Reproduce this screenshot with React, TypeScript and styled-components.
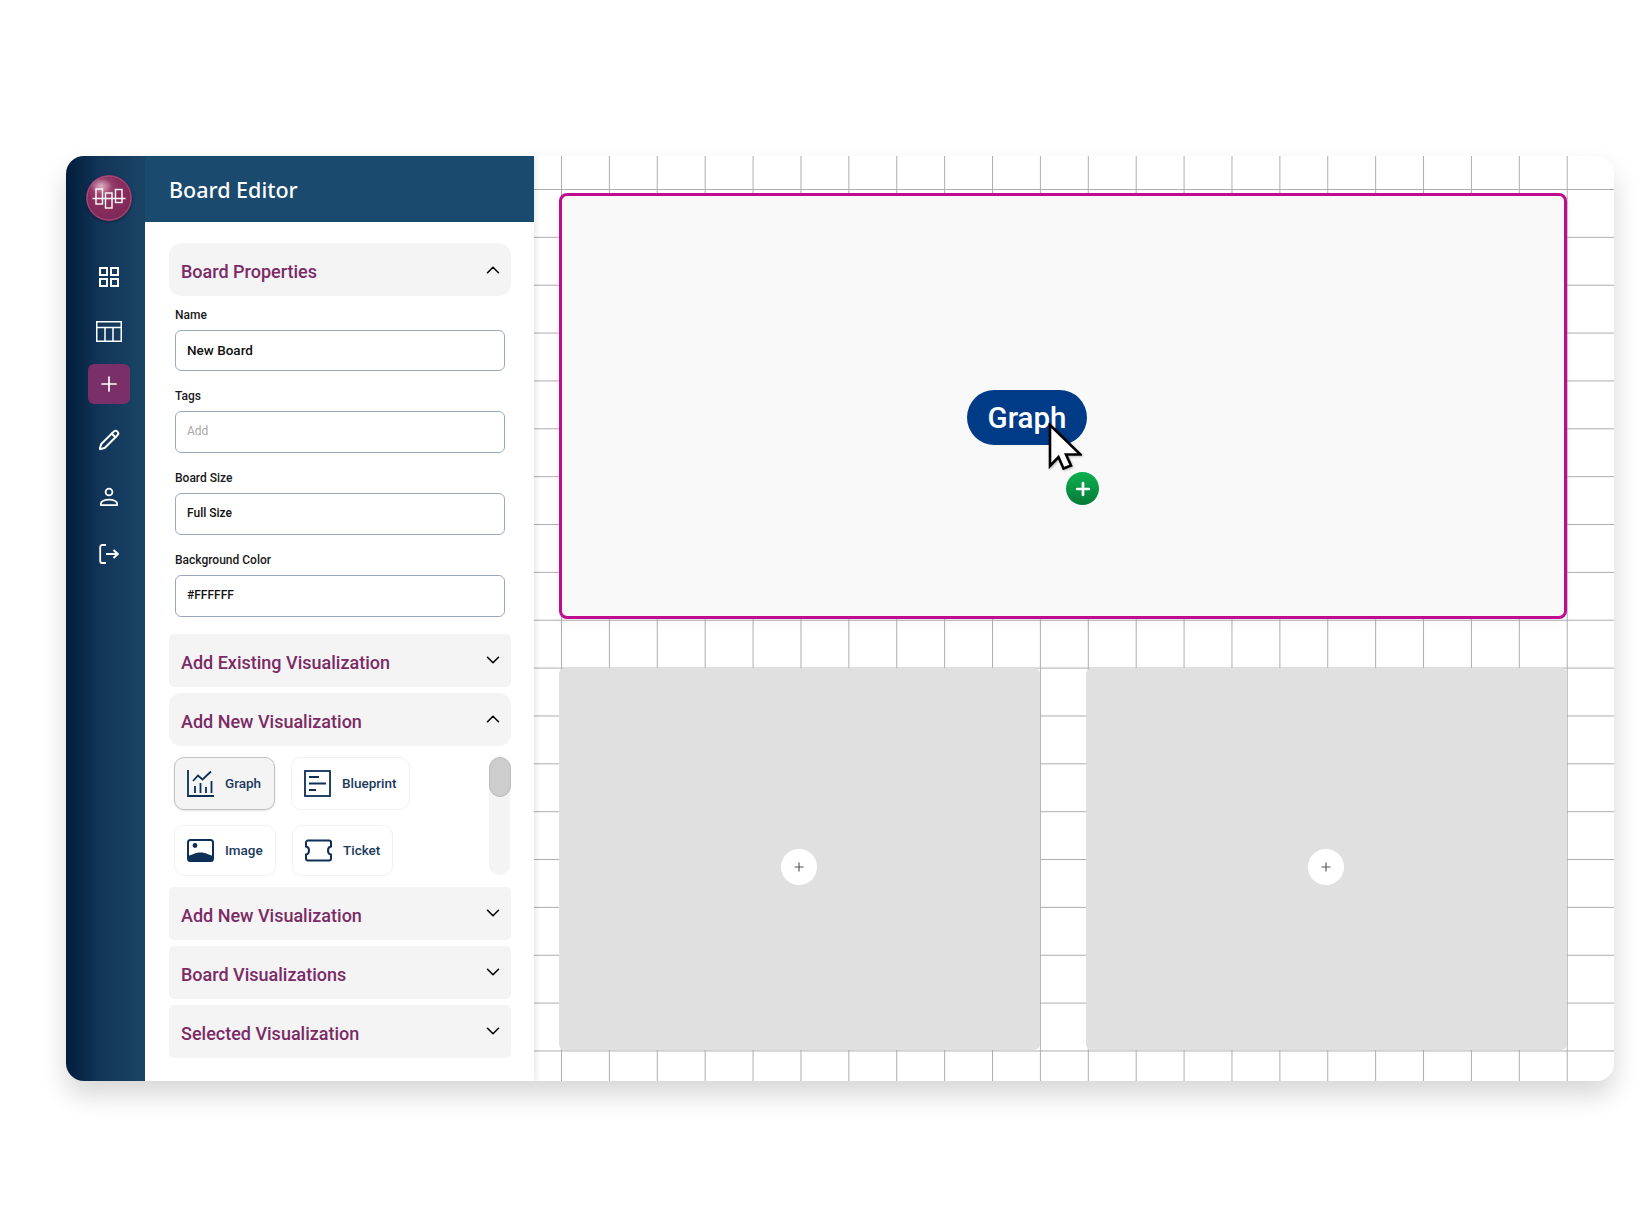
import { ChevronDown, ChevronUp, Pencil, Plus } from 'lucide-react';
import styled, { createGlobalStyle } from 'styled-components';

const GlobalStyle = createGlobalStyle`
  html, body { margin: 0; padding: 0; background: #fff; }
  body { font-family: Roboto, "Liberation Sans", sans-serif; }
`;

function LogoMark() {
  return (
    <svg width="46" height="46" viewBox="0 0 46 46">
      <defs>
        <radialGradient id="logoBody" cx="38%" cy="30%" r="75%">
          <stop offset="0%" stopColor="#b0567f" />
          <stop offset="45%" stopColor="#8a2e5e" />
          <stop offset="100%" stopColor="#7c2858" />
        </radialGradient>
        <radialGradient id="logoGloss" cx="50%" cy="50%" r="50%">
          <stop offset="0%" stopColor="#fff" stopOpacity=".55" />
          <stop offset="100%" stopColor="#fff" stopOpacity="0" />
        </radialGradient>
      </defs>
      <circle cx="23" cy="23" r="23" fill="url(#logoBody)" />
      <circle cx="23" cy="23" r="22" fill="none" stroke="#a8507f" strokeWidth="1" />
      <ellipse cx="15" cy="11" rx="11" ry="8" fill="url(#logoGloss)" />
      <g fill="none" stroke="#fff" strokeWidth="1.4">
        <path d="M6.500 23.500h33" />
        <rect x="10" y="14" width="6.500" height="15" />
        <rect x="19.500" y="18" width="6.500" height="15" />
        <rect x="29.500" y="14.500" width="6.500" height="13" />
      </g>
    </svg>
  );
}

function GridIcon() {
  return (
    <svg width="20" height="20" viewBox="0 0 20 20" fill="none" stroke="#fff" strokeWidth="2">
      <rect x="1" y="1" width="7" height="7" />
      <rect x="12" y="1" width="7" height="7" />
      <rect x="1" y="12" width="7" height="7" />
      <rect x="12" y="12" width="7" height="7" />
    </svg>
  );
}

function TableIcon() {
  return (
    <svg width="26" height="21" viewBox="0 0 26 21" fill="none" stroke="#fff" strokeWidth="1.5">
      <rect x=".75" y=".75" width="24.500" height="19.500" />
      <path d="M.75 6.500h24.500M9 6.500v13.750M17 6.500v13.750" />
    </svg>
  );
}

function PersonIcon() {
  return (
    <svg width="20" height="20" viewBox="0 0 20 20" fill="none" stroke="#fff" strokeWidth="1.8">
      <circle cx="10" cy="5" r="3.400" />
      <path d="M1.900 18.200v-1.600c0-2.300 3.600-4 8.100-4s8.100 1.700 8.100 4v1.600z" strokeLinejoin="round" />
    </svg>
  );
}

function LogoutIcon() {
  return (
    <svg width="20" height="20" viewBox="0 0 20 20" fill="none" stroke="#fff" strokeWidth="1.8">
      <path d="M7 1H3.200C2 1 1.200 1.800 1.200 3v14c0 1.200.8 2 2 2H7" />
      <path d="M7 10h12M14.500 6l4.300 4-4.300 4" strokeWidth="2" />
    </svg>
  );
}

function GraphIcon() {
  return (
    <svg width="27" height="27" viewBox="0 0 27 27" fill="none" stroke="#0e2f56" strokeWidth="1.8">
      <path d="M1 0v26h26" />
      <path d="M8 23v-7M13.500 23v-10M19 23v-6M24.500 23V11" />
      <path d="M6 11l5-5.500 4.500 4L24 1.500" />
    </svg>
  );
}

function BlueprintIcon() {
  return (
    <svg width="27" height="27" viewBox="0 0 27 27" fill="none" stroke="#0e2f56" strokeWidth="1.8">
      <rect x="1" y="1" width="25" height="25" />
      <path d="M5 7h10M5 13.500h17M5 20h7" />
    </svg>
  );
}

function ImageIcon() {
  return (
    <svg width="27" height="23" viewBox="0 0 27 23">
      <rect x="1" y="1" width="25" height="21" rx="2.500" fill="none" stroke="#0e2f56" strokeWidth="2" />
      <circle cx="8" cy="6.500" r="2.400" fill="#0e2f56" />
      <path d="M1 21v-4c4-1 7-3.500 12.500-3.500S22 16 26 17v4a1.500 1.500 0 0 1-1.500 1.500h-22A1.500 1.500 0 0 1 1 21z" fill="#0e2f56" />
    </svg>
  );
}

function TicketIcon() {
  return (
    <svg width="27" height="23" viewBox="0 0 27 23" fill="none" stroke="#0e2f56" strokeWidth="2">
      <path d="M3 1.500h21a2 2 0 0 1 2 2v4c-2 .3-3 2-3 4s1 3.700 3 4v4a2 2 0 0 1-2 2H3a2 2 0 0 1-2-2v-4c2-.3 3-2 3-4s-1-3.700-3-4v-4a2 2 0 0 1 2-2z" />
    </svg>
  );
}

function DragCursor() {
  return (
    <svg width="34" height="48" viewBox="-2 -2 34 48">
      <path
        d="M0 0v41l8.500-9 5 11.500 7.500-3-5-11h14.500z"
        fill="#fff"
        stroke="#000"
        strokeWidth="2.600"
        strokeLinejoin="miter"
      />
    </svg>
  );
}

function Section({ title, open }: { title: string; open?: boolean }) {
  return (
    <SectionHeader $open={open}>
      <SectionTitle>{title}</SectionTitle>
      {open ? <ChevronUp size={22} strokeWidth={1.7} /> : <ChevronDown size={22} strokeWidth={1.7} />}
    </SectionHeader>
  );
}

export default function App() {
  return (
    <Page>
      <GlobalStyle />
      <Editor>
        <Rail>
          <LogoBadge>
            <LogoMark />
          </LogoBadge>
          <RailItem $top={36}>
            <GridIcon />
          </RailItem>
          <RailItem $top={14}>
            <TableIcon />
          </RailItem>
          <RailItem $top={13} $active>
            <Plus size={24} strokeWidth={1.7} />
          </RailItem>
          <RailItem $top={16}>
            <Pencil size={22} strokeWidth={2.2} />
          </RailItem>
          <RailItem $top={17}>
            <PersonIcon />
          </RailItem>
          <RailItem $top={17}>
            <LogoutIcon />
          </RailItem>
        </Rail>

        <Panel>
          <PanelHeader>Board Editor</PanelHeader>
          <PanelBody>
            <Section title="Board Properties" open />
            <PropertiesForm>
              <Field>
                <FieldLabel>Name</FieldLabel>
                <TextInput $height={41} $size={13.5} defaultValue="New Board" readOnly />
              </Field>
              <Field>
                <FieldLabel>Tags</FieldLabel>
                <TextInput $height={42} $size={12} placeholder="Add" readOnly />
              </Field>
              <Field>
                <FieldLabel>Board Size</FieldLabel>
                <TextInput $height={42} $size={12} defaultValue="Full Size" readOnly />
              </Field>
              <Field>
                <FieldLabel>Background Color</FieldLabel>
                <TextInput $height={42} $size={12} defaultValue="#FFFFFF" readOnly />
              </Field>
            </PropertiesForm>

            <Section title="Add Existing Visualization" />
            <Section title="Add New Visualization" open />
            <VizPicker>
              <VizGrid>
                <VizRow>
                  <VizCard $width={101} $height={53} $selected>
                    <GraphIcon />
                    <VizLabel>Graph</VizLabel>
                  </VizCard>
                  <VizCard $width={119} $height={53}>
                    <BlueprintIcon />
                    <VizLabel>Blueprint</VizLabel>
                  </VizCard>
                </VizRow>
                <VizRow>
                  <VizCard $width={102} $height={51}>
                    <ImageIcon />
                    <VizLabel>Image</VizLabel>
                  </VizCard>
                  <VizCard $width={101} $height={51}>
                    <TicketIcon />
                    <VizLabel>Ticket</VizLabel>
                  </VizCard>
                </VizRow>
              </VizGrid>
              <ScrollTrack>
                <ScrollThumb />
              </ScrollTrack>
            </VizPicker>
            <Section title="Add New Visualization" />
            <Section title="Board Visualizations" />
            <Section title="Selected Visualization" />
          </PanelBody>
        </Panel>

        <Canvas>
          <DropZone>
            <DragPill>Graph</DragPill>
            <CursorSpot>
              <DragCursor />
            </CursorSpot>
            <AddBadge>
              <Plus size={20} strokeWidth={3.2} />
            </AddBadge>
          </DropZone>
          <SlotRow>
            <EmptySlot>
              <SlotButton>
                <Plus size={14} strokeWidth={2} />
              </SlotButton>
            </EmptySlot>
            <EmptySlot>
              <SlotButton>
                <Plus size={14} strokeWidth={2} />
              </SlotButton>
            </EmptySlot>
          </SlotRow>
        </Canvas>
      </Editor>
    </Page>
  );
}

const Page = styled.div`
  width: 1642px;
  height: 1214px;
  padding: 156px 28px 0 66px;
  box-sizing: border-box;
  overflow: hidden;
`;

const Editor = styled.div`
  display: flex;
  height: 925px;
  border-radius: 18px;
  overflow: hidden;
  background: #fff;
  box-shadow: 0 14px 26px rgba(0, 0, 0, 0.16);
`;

const Rail = styled.nav`
  flex: 0 0 79px;
  display: flex;
  flex-direction: column;
  align-items: center;
  padding: 19px 0 0 7px;
  box-sizing: border-box;
  background: linear-gradient(to right, #021d3b 0%, #12365a 45%, #1a4465 100%);
  color: #fff;
`;

const LogoBadge = styled.div`
  width: 46px;
  height: 46px;
  border-radius: 50%;
  box-shadow: 0 1px 3px rgba(0, 0, 0, 0.4);
`;

const RailItem = styled.div<{ $top: number; $active?: boolean }>`
  width: 42px;
  height: 40px;
  margin-top: ${(p) => p.$top}px;
  display: flex;
  align-items: center;
  justify-content: center;
  border-radius: 6px;
  background: ${(p) => (p.$active ? '#7b2f68' : 'transparent')};
`;

const Panel = styled.aside`
  flex: 0 0 389px;
  display: flex;
  flex-direction: column;
  background: #fff;
  box-shadow: 3px 0 5px rgba(0, 0, 0, 0.08);
  z-index: 1;
`;

const PanelHeader = styled.header`
  height: 66px;
  padding-left: 24px;
  box-sizing: border-box;
  display: flex;
  align-items: center;
  background: #1a4a6e;
  color: #fff;
  font-family: 'Noto Sans', sans-serif;
  font-size: 21.500px;
  font-weight: 500;
`;

const PanelBody = styled.div`
  padding: 21px 23px 0 24px;
  display: flex;
  flex-direction: column;
  gap: 6px;
`;

const SectionHeader = styled.div<{ $open?: boolean }>`
  height: 53px;
  padding: 0 7px 0 12px;
  box-sizing: border-box;
  display: flex;
  align-items: center;
  justify-content: space-between;
  background: #f4f4f4;
  border-radius: ${(p) => (p.$open ? '12px' : '5px')};
  color: #000;
`;

const SectionTitle = styled.span`
  padding-top: 4px;
  font-size: 18px;
  font-weight: 500;
  color: #7b2a66;
`;

const PropertiesForm = styled.div`
  margin: 6px 0 11px;
  padding: 0 6px;
  display: flex;
  flex-direction: column;
  gap: 18.500px;
`;

const Field = styled.label`
  display: flex;
  flex-direction: column;
  gap: 7.500px;
`;

const FieldLabel = styled.span`
  font-size: 12px;
  line-height: 14px;
  font-weight: 500;
  color: #1a1a1a;
`;

const TextInput = styled.input<{ $height: number; $size: number }>`
  height: ${(p) => p.$height}px;
  padding: 0 11px 1px;
  box-sizing: border-box;
  width: 100%;
  border: 1px solid #9aa8bf;
  border-radius: 6px;
  outline: none;
  background: #fff;
  font-family: Roboto, sans-serif;
  font-size: ${(p) => p.$size}px;
  font-weight: 500;
  color: #111;
  &::placeholder {
    color: #a8a8a8;
    font-weight: 400;
  }
`;

const VizPicker = styled.div`
  margin: 5px 1px 5px 0;
  display: flex;
  justify-content: space-between;
`;

const VizGrid = styled.div`
  margin-left: 5px;
  display: flex;
  flex-direction: column;
  gap: 15px;
`;

const VizRow = styled.div`
  display: flex;
  gap: 16px;
`;

const VizCard = styled.div<{ $width: number; $height: number; $selected?: boolean }>`
  width: ${(p) => p.$width}px;
  height: ${(p) => p.$height}px;
  padding-left: 12px;
  box-sizing: border-box;
  display: flex;
  align-items: center;
  gap: 11px;
  border-radius: 10px;
  border: ${(p) => (p.$selected ? '1.500px solid #c2c2c2' : '1px solid #f1f1f1')};
  background: ${(p) => (p.$selected ? '#f4f4f4' : '#fff')};
  box-shadow: ${(p) => (p.$selected ? '0 1px 2px rgba(0,0,0,.12)' : 'none')};
`;

const VizLabel = styled.span`
  font-size: 13.500px;
  font-weight: 500;
  color: #1a3a5c;
`;

const ScrollTrack = styled.div`
  width: 21px;
  height: 118px;
  border-radius: 11px;
  background: #f4f4f4;
`;

const ScrollThumb = styled.div`
  width: 22px;
  height: 40px;
  border-radius: 11px;
  background: #cdcdcd;
  border: 1px solid #bcbcbc;
  box-sizing: border-box;
`;

const Canvas = styled.main`
  flex: 1;
  padding: 37px 47px 0 25px;
  box-sizing: border-box;
  display: flex;
  flex-direction: column;
  gap: 49px;
  background-color: #fff;
  background-image: linear-gradient(to right, #aeaeae 1.200px, transparent 1.200px),
    linear-gradient(to bottom, #aeaeae 1.200px, transparent 1.200px);
  background-size: 47.900px 47.860px;
  background-position: 27px 33px;
`;

const DropZone = styled.section`
  position: relative;
  height: 426px;
  box-sizing: border-box;
  flex: none;
  border: 3px solid #c00d90;
  border-radius: 8px;
  background: #f9f9f9;
  box-shadow: 0 6px 14px rgba(0, 0, 0, 0.03);
`;

const DragPill = styled.div`
  position: absolute;
  left: 405px;
  top: 194px;
  width: 120px;
  height: 55px;
  display: flex;
  align-items: center;
  justify-content: center;
  border-radius: 28px;
  background: #003b87;
  color: #fff;
  font-size: 29.500px;
  font-weight: 500;
`;

const CursorSpot = styled.div`
  position: absolute;
  left: 486px;
  top: 227px;
  line-height: 0;
  filter: drop-shadow(1px 1px 1px rgba(0, 0, 0, 0.25));
`;

const AddBadge = styled.div`
  position: absolute;
  left: 504px;
  top: 276px;
  width: 33px;
  height: 33px;
  border-radius: 50%;
  display: flex;
  align-items: center;
  justify-content: center;
  color: #fff;
  background: linear-gradient(to bottom, #0cb14f, #067a39);
`;

const SlotRow = styled.div`
  display: flex;
  gap: 46px;
`;

const EmptySlot = styled.div`
  flex: 1;
  height: 382px;
  padding: 16px 2px 0 0;
  box-sizing: border-box;
  display: flex;
  align-items: center;
  justify-content: center;
  border-radius: 6px;
  background: #e0e0e0;
`;

const SlotButton = styled.div`
  width: 36px;
  height: 36px;
  border-radius: 50%;
  display: flex;
  align-items: center;
  justify-content: center;
  background: #fff;
  color: #555;
`;
